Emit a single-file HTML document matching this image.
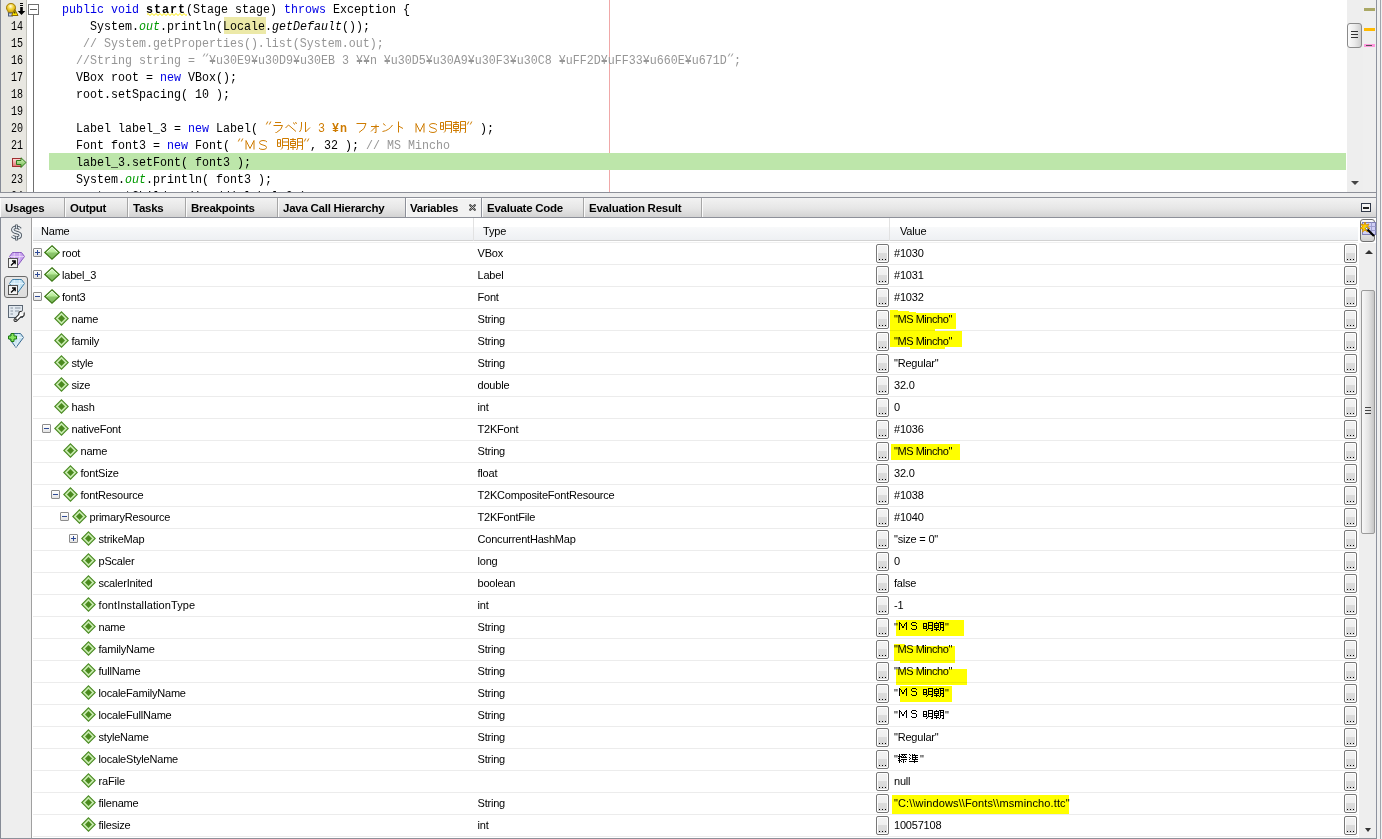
<!DOCTYPE html><html><head><meta charset="utf-8"><style>
*{margin:0;padding:0;box-sizing:border-box}
html,body{width:1382px;height:839px;overflow:hidden;background:#fff;font-family:"Liberation Sans",sans-serif}
.a{position:absolute}
svg.a{overflow:visible}
.ln{position:absolute;font-family:"Liberation Mono",monospace;font-size:11.667px;color:#000;line-height:17px;height:17px;white-space:pre;transform:scale(0.86,1.12);transform-origin:0 12px;margin-top:2px}
.cr{position:absolute;font-family:"Liberation Mono",monospace;font-size:11.667px;white-space:pre;color:#000;line-height:17px;height:17px;transform:scaleY(1.12);transform-origin:0 12px;margin-top:2px}
.tab{position:absolute;top:198px;height:19px;font-weight:bold;font-size:11.5px;color:#000;line-height:19px;border-right:1px solid #a6a6a6;border-left:1px solid #fbfbfb;background:linear-gradient(#f2f2f2,#e6e6e6 55%,#d3d3d3)}
.tab span{position:absolute;left:4px;top:1px;letter-spacing:-0.25px;white-space:nowrap}
.hc{position:absolute;top:224px;font-size:11px;line-height:14px;color:#000;letter-spacing:-0.2px}
.sep{position:absolute;left:33px;width:1325px;height:1px;background:#ececec}
.t{position:absolute;font-size:11px;line-height:14px;color:#000;white-space:pre;letter-spacing:-0.2px}
.btn{position:absolute;width:13px;height:19px;border:1px solid #777;border-radius:2px;box-shadow:inset 0 0 0 1px #fff;background:linear-gradient(#f3f3f3,#efefef 45%,#dcdcdc 50%,#d8d8d8)}
.btn i{position:absolute;top:14px;width:1px;height:1px;background:#000}
.hl{position:absolute;background:#ffff00;mix-blend-mode:multiply}
</style></head><body>
<div class="a" style="left:0;top:0;width:1px;height:192px;background:#868b96"></div>
<div class="a" style="left:1px;top:0;width:25px;height:192px;background:#e8e7e1"></div>
<div class="a" style="left:26px;top:0;width:1px;height:192px;background:#c2c2ba"></div>
<div class="a" style="left:28px;top:4px;width:11px;height:11px;border:1px solid #707070;background:#fff"></div>
<div class="a" style="left:30px;top:9px;width:7px;height:1px;background:#606060"></div>
<div class="a" style="left:33px;top:15px;width:1px;height:177px;background:#707070"></div>
<div class="a" style="left:609px;top:0;width:1px;height:192px;background:#f0a8a8"></div>
<div class="a" style="left:224px;top:17px;width:42px;height:17px;background:#ece9a8"></div>
<div class="a" style="left:49px;top:153px;width:1297px;height:17px;background:#bde6aa"></div>
<svg class="a" style="left:4px;top:2px" width="23" height="15" viewBox="0 0 23 15">
<defs><radialGradient id="bulb" cx="0.45" cy="0.3" r="0.7"><stop offset="0" stop-color="#fffbe0"/><stop offset="0.45" stop-color="#f3d33a"/><stop offset="1" stop-color="#c79a00"/></radialGradient></defs>
<path d="M7 1.5C4 1.5 2.5 3.5 2.5 5.8C2.5 8 4.2 9 4.5 11H9.5C9.8 9 11.5 8 11.5 5.8C11.5 3.5 10 1.5 7 1.5Z" fill="url(#bulb)" stroke="#a27a00" stroke-width="1"/>
<rect x="4.5" y="11" width="4" height="3" fill="#c8d0e0" stroke="#4a5a78" stroke-width="1"/>
<path d="M10.8 7.5L14 13.5H7.6Z" fill="#ffe600" stroke="#8a6a00" stroke-width="1"/>
<path d="M10.8 9.5V11.5" stroke="#000" stroke-width="1"/>
<path d="M16 1.5H19 M16 3.5H19" stroke="#000" stroke-width="1.2"/>
<path d="M16.2 5H18.8V9H21.3L17.5 13L13.7 9H16.2Z" fill="#000"/>
</svg>
<svg class="a" style="left:11px;top:157px" width="16" height="12" viewBox="0 0 16 12">
<defs><linearGradient id="rb" x1="0" y1="0" x2="0" y2="1"><stop offset="0" stop-color="#ffe0e0"/><stop offset="1" stop-color="#e07070"/></linearGradient>
<linearGradient id="ga" x1="0" y1="0" x2="0" y2="1"><stop offset="0" stop-color="#d8f5c0"/><stop offset="1" stop-color="#6cb84a"/></linearGradient></defs>
<rect x="1.5" y="1.5" width="9" height="8" fill="url(#rb)" stroke="#a03030" stroke-width="1"/>
<path d="M5.5 3.5H10V0.8L15 5.5L10 10.5V7.5H5.5Z" fill="url(#ga)" stroke="#2f7a1a" stroke-width="1"/>
</svg>
<div class="ln" style="left:10.5px;top:17px">14</div>
<div class="ln" style="left:10.5px;top:34px">15</div>
<div class="ln" style="left:10.5px;top:51px">16</div>
<div class="ln" style="left:10.5px;top:68px">17</div>
<div class="ln" style="left:10.5px;top:85px">18</div>
<div class="ln" style="left:10.5px;top:102px">19</div>
<div class="ln" style="left:10.5px;top:119px">20</div>
<div class="ln" style="left:10.5px;top:136px">21</div>
<div class="ln" style="left:10.5px;top:170px">23</div>
<div class="ln" style="left:10.5px;top:187px">24</div>
<div class="cr" style="left:62px;top:0px;color:#0000e6;">public</div>
<div class="cr" style="left:104px;top:0px;color:#000;"> </div>
<div class="cr" style="left:111px;top:0px;color:#0000e6;">void</div>
<div class="cr" style="left:139px;top:0px;color:#000;"> </div>
<div class="cr" style="left:146px;top:0px;color:#000;font-weight:bold;letter-spacing:1px">start</div>
<div class="cr" style="left:186px;top:0px;color:#000;">(Stage stage) </div>
<div class="cr" style="left:284px;top:0px;color:#0000e6;">throws</div>
<div class="cr" style="left:326px;top:0px;color:#000;"> Exception {</div>
<div class="cr" style="left:90px;top:17px;color:#000;">System.</div>
<div class="cr" style="left:139px;top:17px;color:#009900;font-style:italic">out</div>
<div class="cr" style="left:160px;top:17px;color:#000;">.println(</div>
<div class="cr" style="left:223px;top:17px;color:#000;">Locale</div>
<div class="cr" style="left:265px;top:17px;color:#000;">.</div>
<div class="cr" style="left:272px;top:17px;color:#000;font-style:italic">getDefault</div>
<div class="cr" style="left:342px;top:17px;color:#000;">());</div>
<div class="cr" style="left:83px;top:34px;color:#969696;">// System.getProperties().list(System.out);</div>
<div class="cr" style="left:76px;top:51px;color:#969696;">//String string = </div>
<svg class="a" style="left:202px;top:53px" width="7" height="5" viewBox="0 0 7 5"><path d="M2.8 0.5L1.3 3.5 M5.8 0.5L4.3 3.5" stroke="#969696" stroke-width="1" fill="none"/></svg>
<div class="cr" style="left:209px;top:51px;color:#969696;">¥u30E9¥u30D9¥u30EB 3 ¥¥n ¥u30D5¥u30A9¥u30F3¥u30C8 ¥uFF2D¥uFF33¥u660E¥u671D</div>
<svg class="a" style="left:727px;top:53px" width="7" height="5" viewBox="0 0 7 5"><path d="M2.8 0.5L1.3 3.5 M5.8 0.5L4.3 3.5" stroke="#969696" stroke-width="1" fill="none"/></svg>
<div class="cr" style="left:734px;top:51px;color:#969696;">;</div>
<div class="cr" style="left:76px;top:68px;color:#000;">VBox root = </div>
<div class="cr" style="left:160px;top:68px;color:#0000e6;">new</div>
<div class="cr" style="left:181px;top:68px;color:#000;"> VBox();</div>
<div class="cr" style="left:76px;top:85px;color:#000;">root.setSpacing( 10 );</div>
<div class="cr" style="left:76px;top:119px;color:#000;">Label label_3 = </div>
<div class="cr" style="left:188px;top:119px;color:#0000e6;">new</div>
<div class="cr" style="left:209px;top:119px;color:#000;"> Label( </div>
<svg class="a" style="left:265px;top:121px" width="7" height="5" viewBox="0 0 7 5"><path d="M2.8 0.5L1.3 3.5 M5.8 0.5L4.3 3.5" stroke="#ce7b00" stroke-width="1" fill="none"/></svg>
<svg class="a" style="left:272px;top:121px" width="13" height="12" viewBox="0 0 13 12"><path d="M3 1.5H9 M1.5 4.5H10.5Q10 8.5 4.5 11.5H3.5" fill="none" stroke="#ce7b00" stroke-width="1"/></svg>
<svg class="a" style="left:285px;top:121px" width="13" height="12" viewBox="0 0 13 12"><path d="M0.5 7 L3.5 4 L11 10.5 M8.5 1.5L9.5 3.5 M10.5 1L11.5 3" fill="none" stroke="#ce7b00" stroke-width="1"/></svg>
<svg class="a" style="left:298px;top:121px" width="13" height="12" viewBox="0 0 13 12"><path d="M3.5 1V5Q3.5 9 1.5 11 M7.5 1V11 L12 6.5" fill="none" stroke="#ce7b00" stroke-width="1"/></svg>
<div class="cr" style="left:311px;top:119px;color:#ce7b00;"> 3 </div>
<div class="cr" style="left:332px;top:119px;color:#ce7b00;font-weight:bold;letter-spacing:1px">¥n</div>
<div class="cr" style="left:348px;top:119px;color:#ce7b00;"> </div>
<svg class="a" style="left:355px;top:121px" width="13" height="12" viewBox="0 0 13 12"><path d="M1.5 2.5H11Q10.5 8 4 11.5" fill="none" stroke="#ce7b00" stroke-width="1"/></svg>
<svg class="a" style="left:368px;top:121px" width="13" height="12" viewBox="0 0 13 12"><path d="M3 5.5H11 M8 3.5V11.5H6.5 M7.5 6L3 10.5" fill="none" stroke="#ce7b00" stroke-width="1"/></svg>
<svg class="a" style="left:381px;top:121px" width="13" height="12" viewBox="0 0 13 12"><path d="M2 2.5L4.5 4.5 M1.5 10.5Q8 9.5 11.5 4" fill="none" stroke="#ce7b00" stroke-width="1"/></svg>
<svg class="a" style="left:394px;top:121px" width="13" height="12" viewBox="0 0 13 12"><path d="M4.5 0.5V11.5 M4.5 5L9 7.5" fill="none" stroke="#ce7b00" stroke-width="1"/></svg>
<div class="cr" style="left:407px;top:119px;color:#ce7b00;"> </div>
<svg class="a" style="left:414px;top:122px" width="13" height="12" viewBox="0 0 13 12"><path d="M2 10.5V1.5L6 9.5L10 1.5V10.5" fill="none" stroke="#ce7b00" stroke-width="1"/></svg>
<svg class="a" style="left:427px;top:122px" width="13" height="12" viewBox="0 0 13 12"><path d="M10 3Q9 1.5 6 1.5Q2.5 1.5 2.5 3.5Q2.5 5.5 6 6Q9.5 6.5 9.5 8.5Q9.5 10.5 6 10.5Q3 10.5 2 9" fill="none" stroke="#ce7b00" stroke-width="1"/></svg>
<svg class="a" style="left:440px;top:121px" width="13" height="12" viewBox="0 0 13 12"><path d="M0.5 1.5H3.5V8.5H0.5Z M0.5 5H3.5 M5.5 0.5H11.5V11.5H10.5 M5.5 0.5V8.5Q5.5 10.5 4 11.5 M5.5 4H11.5 M5.5 7.5H11.5" fill="none" stroke="#ce7b00" stroke-width="1"/></svg>
<svg class="a" style="left:453px;top:121px" width="13" height="12" viewBox="0 0 13 12"><path d="M0 1.5H6 M3 0V3.5 M0.5 3.5H5.5V7.5H0.5Z M0.5 5.5H5.5 M0 9.5H6 M3 7.5V12 M7.5 0.5H12.5V11.5H11.5 M7.5 0.5V9Q7.5 11 6.5 12 M7.5 4H12.5 M7.5 7.5H12.5" fill="none" stroke="#ce7b00" stroke-width="1"/></svg>
<svg class="a" style="left:466px;top:121px" width="7" height="5" viewBox="0 0 7 5"><path d="M2.8 0.5L1.3 3.5 M5.8 0.5L4.3 3.5" stroke="#ce7b00" stroke-width="1" fill="none"/></svg>
<div class="cr" style="left:473px;top:119px;color:#000;"> );</div>
<div class="cr" style="left:76px;top:136px;color:#000;">Font font3 = </div>
<div class="cr" style="left:167px;top:136px;color:#0000e6;">new</div>
<div class="cr" style="left:188px;top:136px;color:#000;"> Font( </div>
<svg class="a" style="left:237px;top:138px" width="7" height="5" viewBox="0 0 7 5"><path d="M2.8 0.5L1.3 3.5 M5.8 0.5L4.3 3.5" stroke="#ce7b00" stroke-width="1" fill="none"/></svg>
<svg class="a" style="left:244px;top:139px" width="13" height="12" viewBox="0 0 13 12"><path d="M2 10.5V1.5L6 9.5L10 1.5V10.5" fill="none" stroke="#ce7b00" stroke-width="1"/></svg>
<svg class="a" style="left:257px;top:139px" width="13" height="12" viewBox="0 0 13 12"><path d="M10 3Q9 1.5 6 1.5Q2.5 1.5 2.5 3.5Q2.5 5.5 6 6Q9.5 6.5 9.5 8.5Q9.5 10.5 6 10.5Q3 10.5 2 9" fill="none" stroke="#ce7b00" stroke-width="1"/></svg>
<div class="cr" style="left:270px;top:136px;color:#ce7b00;"> </div>
<svg class="a" style="left:277px;top:138px" width="13" height="12" viewBox="0 0 13 12"><path d="M0.5 1.5H3.5V8.5H0.5Z M0.5 5H3.5 M5.5 0.5H11.5V11.5H10.5 M5.5 0.5V8.5Q5.5 10.5 4 11.5 M5.5 4H11.5 M5.5 7.5H11.5" fill="none" stroke="#ce7b00" stroke-width="1"/></svg>
<svg class="a" style="left:290px;top:138px" width="13" height="12" viewBox="0 0 13 12"><path d="M0 1.5H6 M3 0V3.5 M0.5 3.5H5.5V7.5H0.5Z M0.5 5.5H5.5 M0 9.5H6 M3 7.5V12 M7.5 0.5H12.5V11.5H11.5 M7.5 0.5V9Q7.5 11 6.5 12 M7.5 4H12.5 M7.5 7.5H12.5" fill="none" stroke="#ce7b00" stroke-width="1"/></svg>
<svg class="a" style="left:303px;top:138px" width="7" height="5" viewBox="0 0 7 5"><path d="M2.8 0.5L1.3 3.5 M5.8 0.5L4.3 3.5" stroke="#ce7b00" stroke-width="1" fill="none"/></svg>
<div class="cr" style="left:310px;top:136px;color:#000;">, 32 ); </div>
<div class="cr" style="left:366px;top:136px;color:#969696;">// MS Mincho</div>
<div class="cr" style="left:76px;top:153px;color:#000;">label_3.setFont( font3 );</div>
<div class="cr" style="left:76px;top:170px;color:#000;">System.</div>
<div class="cr" style="left:125px;top:170px;color:#009900;font-style:italic">out</div>
<div class="cr" style="left:146px;top:170px;color:#000;">.println( font3 );</div>
<div class="cr" style="left:76px;top:187px;color:#000;">root.getChildren().add( label_3 );</div>
<svg class="a" style="left:147px;top:12px" width="40" height="4" viewBox="0 0 40 4"><path d="M0 1.5h2v1h-2z M2 2.5h2v1h-2z M4 1.5h2v1h-2z M6 2.5h2v1h-2z M8 1.5h2v1h-2z M10 2.5h2v1h-2z M12 1.5h2v1h-2z M14 2.5h2v1h-2z M16 1.5h2v1h-2z M18 2.5h2v1h-2z M20 1.5h2v1h-2z M22 2.5h2v1h-2z M24 1.5h2v1h-2z M26 2.5h2v1h-2z M28 1.5h2v1h-2z M30 2.5h2v1h-2z M32 1.5h2v1h-2z M34 2.5h2v1h-2z M36 1.5h2v1h-2z M38 2.5h2v1h-2z " fill="#ffee00"/></svg>
<div class="a" style="left:1347px;top:0;width:16px;height:192px;background:#eeeeee"></div>
<div class="a" style="left:1347px;top:23px;width:15px;height:25px;border:1px solid #8a8a8a;border-radius:3px;background:linear-gradient(90deg,#fbfbfb,#ebebeb 50%,#cfcfcf)"></div>
<div class="a" style="left:1351px;top:31px;width:7px;height:1px;background:#333"></div>
<div class="a" style="left:1351px;top:34px;width:7px;height:1px;background:#333"></div>
<div class="a" style="left:1351px;top:37px;width:7px;height:1px;background:#333"></div>
<div class="a" style="left:1351px;top:181px;width:0;height:0;border-left:4px solid transparent;border-right:4px solid transparent;border-top:4px solid #444"></div>
<div class="a" style="left:1363px;top:0;width:13px;height:192px;background:#efefef"></div>
<div class="a" style="left:1364px;top:8px;width:11px;height:3px;background:#aaa866"></div>
<div class="a" style="left:1364px;top:28px;width:11px;height:3px;background:#ffba00"></div>
<div class="a" style="left:1364px;top:44px;width:11px;height:3px;background:#ff99dd"></div>
<div class="a" style="left:1366px;top:45px;width:6px;height:1px;background:#555"></div>
<div class="a" style="left:1376px;top:0;width:1px;height:839px;background:#8d929e"></div>
<div class="a" style="left:1377px;top:0;width:5px;height:839px;background:#f0f0f0"></div>
<div class="a" style="left:1380px;top:0;width:1px;height:839px;background:#a0a4ac"></div>
<div class="a" style="left:0;top:192px;width:1377px;height:1px;background:#8d9099"></div>
<div class="a" style="left:0;top:193px;width:1376px;height:4px;background:#eeeeee"></div>
<div class="a" style="left:0;top:197px;width:1376px;height:21px;background:linear-gradient(#f2f2f2,#e6e6e6 55%,#d3d3d3);border-top:1px solid #8d9099;border-bottom:1px solid #8d9099"></div>
<div class="tab" style="left:0px;width:65px"><span>Usages</span></div>
<div class="tab" style="left:65px;width:63px"><span>Output</span></div>
<div class="tab" style="left:128px;width:58px"><span>Tasks</span></div>
<div class="tab" style="left:186px;width:92px"><span>Breakpoints</span></div>
<div class="tab" style="left:278px;width:128px"><span>Java Call Hierarchy</span></div>
<div class="tab" style="left:405px;width:77px;background:#f2f2f2;border-left:1px solid #8d9099;border-right:1px solid #8d9099;box-shadow:inset 1px 1px 0 #fff"><span>Variables</span></div>
<svg class="a" style="left:469px;top:204px" width="7" height="7" viewBox="0 0 7 7"><path d="M1.2 1.2L5.8 5.8M5.8 1.2L1.2 5.8" stroke="#3a3a3a" stroke-width="2.2" stroke-linecap="round"/><path d="M1.5 1.5L5.5 5.5M5.5 1.5L1.5 5.5" stroke="#e8e8e8" stroke-width="0.7"/></svg>
<div class="tab" style="left:482px;width:102px"><span>Evaluate Code</span></div>
<div class="tab" style="left:584px;width:118px"><span>Evaluation Result</span></div>
<div class="tab" style="left:702px;width:674px;border-right:none"></div>
<div class="a" style="left:1361px;top:203px;width:10px;height:9px;border:1px solid #303848;background:#f4f4f4"></div>
<div class="a" style="left:1363px;top:207px;width:6px;height:2px;background:#202020"></div>
<div class="a" style="left:0;top:218px;width:1px;height:621px;background:#868b96"></div>
<div class="a" style="left:1px;top:218px;width:30px;height:621px;background:#eeeeee"></div>
<div class="a" style="left:31px;top:218px;width:1px;height:621px;background:#a0a0a0"></div>
<svg class="a" style="left:10px;top:224px" width="13" height="17" viewBox="0 0 13 17"><path d="M10.3 5C9.5 3.8 8.2 3.2 6.5 3.2C4.3 3.2 2.8 4.2 2.8 5.8C2.8 7.6 4.6 8.1 6.5 8.5C8.4 8.9 10.3 9.5 10.3 11.2C10.3 12.8 8.7 13.8 6.5 13.8C4.6 13.8 3.2 13.2 2.3 12" fill="none" stroke="#4b5560" stroke-width="3.4"/><path d="M10.3 5C9.5 3.8 8.2 3.2 6.5 3.2C4.3 3.2 2.8 4.2 2.8 5.8C2.8 7.6 4.6 8.1 6.5 8.5C8.4 8.9 10.3 9.5 10.3 11.2C10.3 12.8 8.7 13.8 6.5 13.8C4.6 13.8 3.2 13.2 2.3 12" fill="none" stroke="#e8eef3" stroke-width="1.6"/><path d="M6.5 0.5V4.5 M6.5 12.5V16.5" stroke="#4b5560" stroke-width="2.6"/><path d="M6.5 1.2V4.5 M6.5 12.5V15.8" stroke="#e8eef3" stroke-width="0.9"/></svg>
<svg class="a" style="left:9px;top:252px" width="16" height="15" viewBox="0 0 16 15"><path d="M3.5 0.5H12.5L15.5 4.5L8 14.5L0.5 4.5Z" fill="#c9a2f0" stroke="#8a5cc0" stroke-width="1"/><path d="M0.8 4.5H15.2 M5 4.5L8 14 L11 4.5 M5.5 0.8L5 4.5 M10.5 0.8L11 4.5" fill="none" stroke="#fff" stroke-width="0.6" opacity="0.8"/></svg>
<svg class="a" style="left:8px;top:258px" width="10" height="10" viewBox="0 0 10 10"><rect x="0.5" y="0.5" width="9" height="9" fill="#f4f4f4" stroke="#555" stroke-width="1"/><path d="M3 7.5L7 3.5 M4 3H7.2V6.2" fill="none" stroke="#000" stroke-width="1.3"/></svg>
<div class="a" style="left:4px;top:276px;width:24px;height:22px;border:1px solid #6a6a6a;border-radius:3px;background:linear-gradient(#e6e6e6,#dcdcdc)"></div>
<svg class="a" style="left:9px;top:279px" width="16" height="15" viewBox="0 0 16 15"><path d="M3.5 0.5H12.5L15.5 4.5L8 14.5L0.5 4.5Z" fill="#c6e4f4" stroke="#3f7fa8" stroke-width="1"/><path d="M0.8 4.5H15.2 M5 4.5L8 14 L11 4.5 M5.5 0.8L5 4.5 M10.5 0.8L11 4.5" fill="none" stroke="#fff" stroke-width="0.6" opacity="0.8"/></svg>
<svg class="a" style="left:8px;top:285px" width="10" height="10" viewBox="0 0 10 10"><rect x="0.5" y="0.5" width="9" height="9" fill="#f4f4f4" stroke="#555" stroke-width="1"/><path d="M3 7.5L7 3.5 M4 3H7.2V6.2" fill="none" stroke="#000" stroke-width="1.3"/></svg>
<svg class="a" style="left:8px;top:305px" width="17" height="17" viewBox="0 0 17 17"><rect x="0.5" y="0.5" width="14" height="12" fill="#e2e9f0" stroke="#5b6673" stroke-width="1"/><path d="M2.5 3H5 M7 3H12.5 M2.5 6H5 M7 6H11 M2.5 9H5" stroke="#8a96a4" stroke-width="1"/><path d="M7.5 15L13 9.5" stroke="#2e2e2e" stroke-width="4" stroke-linecap="round"/><circle cx="13.5" cy="9" r="3.3" fill="#2e2e2e"/><path d="M7.5 15L13 9.5" stroke="#ffffff" stroke-width="2" stroke-linecap="round"/><circle cx="13.5" cy="9" r="2.2" fill="#fff"/><path d="M13.2 8.8L16 6" stroke="#eeeeee" stroke-width="2"/><circle cx="8" cy="14.5" r="1" fill="#333"/></svg>
<svg class="a" style="left:8px;top:333px" width="16" height="15" viewBox="0 0 16 15"><path d="M3.5 0.5H12.5L15.5 4.5L8 14.5L0.5 4.5Z" fill="#c8e4f2" stroke="#3a6890" stroke-width="1"/><path d="M0.8 4.5H15.2 M5 4.5L8 14 L11 4.5 M5.5 0.8L5 4.5 M10.5 0.8L11 4.5" fill="none" stroke="#fff" stroke-width="0.6" opacity="0.8"/></svg>
<svg class="a" style="left:8px;top:333px" width="9" height="9" viewBox="0 0 9 9"><path d="M3 0.5H6V3H8.5V6H6V8.5H3V6H0.5V3H3Z" fill="#86e460" stroke="#1f7a10" stroke-width="1"/></svg>
<div class="a" style="left:33px;top:227px;width:1325px;height:13px;background:linear-gradient(#f8f9fa,#eef0f3)"></div>
<div class="a" style="left:33px;top:240px;width:1325px;height:1px;background:#d2d2d2"></div>
<div class="a" style="left:33px;top:242px;width:1325px;height:1px;background:#f0f0f0"></div>
<div class="a" style="left:473px;top:218px;width:1px;height:23px;background:#e2e2e2"></div>
<div class="a" style="left:889px;top:218px;width:1px;height:23px;background:#e2e2e2"></div>
<div class="hc" style="left:41px">Name</div>
<div class="hc" style="left:483px">Type</div>
<div class="hc" style="left:900px">Value</div>
<div class="sep" style="top:264px"></div>
<div class="a" style="left:33px;top:248px;width:9px;height:9px;border:1px solid #8c8c8c;border-radius:1px;background:linear-gradient(#ffffff,#f2f2f2 50%,#e4e4e4)"></div>
<div class="a" style="left:35px;top:252px;width:5px;height:1px;background:#2f4b96"></div>
<div class="a" style="left:37px;top:250px;width:1px;height:5px;background:#2f4b96"></div>
<svg class="a" style="left:44px;top:245px" width="16" height="15" viewBox="0 0 16 15"><defs><linearGradient id="dg0" x1="0" y1="0" x2="0" y2="1"><stop offset="0" stop-color="#dcfacc"/><stop offset="0.47" stop-color="#b4ea94"/><stop offset="0.53" stop-color="#8cc66c"/><stop offset="1" stop-color="#7cb85c"/></linearGradient></defs><path d="M8 0.8L15.2 7.5L8 14.2L0.8 7.5Z" fill="url(#dg0)" stroke="#3d7a16" stroke-width="1.25"/><path d="M2.6 7.3L8 2.3L13.4 7.3" fill="none" stroke="#f4fff0" stroke-width="0.8" opacity="0.9"/></svg>
<div class="t" style="left:62px;top:246px">root</div>
<div class="t" style="left:477.5px;top:246px">VBox</div>
<div class="btn" style="left:876px;top:244px"><i style="left:2px"></i><i style="left:5px"></i><i style="left:8px"></i></div>
<div class="btn" style="left:1344px;top:244px"><i style="left:2px"></i><i style="left:5px"></i><i style="left:8px"></i></div>
<div class="t" style="left:894px;top:246px">#1030</div>
<div class="sep" style="top:286px"></div>
<div class="a" style="left:33px;top:270px;width:9px;height:9px;border:1px solid #8c8c8c;border-radius:1px;background:linear-gradient(#ffffff,#f2f2f2 50%,#e4e4e4)"></div>
<div class="a" style="left:35px;top:274px;width:5px;height:1px;background:#2f4b96"></div>
<div class="a" style="left:37px;top:272px;width:1px;height:5px;background:#2f4b96"></div>
<svg class="a" style="left:44px;top:267px" width="16" height="15" viewBox="0 0 16 15"><defs><linearGradient id="dg1" x1="0" y1="0" x2="0" y2="1"><stop offset="0" stop-color="#dcfacc"/><stop offset="0.47" stop-color="#b4ea94"/><stop offset="0.53" stop-color="#8cc66c"/><stop offset="1" stop-color="#7cb85c"/></linearGradient></defs><path d="M8 0.8L15.2 7.5L8 14.2L0.8 7.5Z" fill="url(#dg1)" stroke="#3d7a16" stroke-width="1.25"/><path d="M2.6 7.3L8 2.3L13.4 7.3" fill="none" stroke="#f4fff0" stroke-width="0.8" opacity="0.9"/></svg>
<div class="t" style="left:62px;top:268px">label_3</div>
<div class="t" style="left:477.5px;top:268px">Label</div>
<div class="btn" style="left:876px;top:266px"><i style="left:2px"></i><i style="left:5px"></i><i style="left:8px"></i></div>
<div class="btn" style="left:1344px;top:266px"><i style="left:2px"></i><i style="left:5px"></i><i style="left:8px"></i></div>
<div class="t" style="left:894px;top:268px">#1031</div>
<div class="sep" style="top:308px"></div>
<div class="a" style="left:33px;top:292px;width:9px;height:9px;border:1px solid #8c8c8c;border-radius:1px;background:linear-gradient(#ffffff,#f2f2f2 50%,#e4e4e4)"></div>
<div class="a" style="left:35px;top:296px;width:5px;height:1px;background:#2f4b96"></div>
<svg class="a" style="left:44px;top:289px" width="16" height="15" viewBox="0 0 16 15"><defs><linearGradient id="dg2" x1="0" y1="0" x2="0" y2="1"><stop offset="0" stop-color="#dcfacc"/><stop offset="0.47" stop-color="#b4ea94"/><stop offset="0.53" stop-color="#8cc66c"/><stop offset="1" stop-color="#7cb85c"/></linearGradient></defs><path d="M8 0.8L15.2 7.5L8 14.2L0.8 7.5Z" fill="url(#dg2)" stroke="#3d7a16" stroke-width="1.25"/><path d="M2.6 7.3L8 2.3L13.4 7.3" fill="none" stroke="#f4fff0" stroke-width="0.8" opacity="0.9"/></svg>
<div class="t" style="left:62px;top:290px">font3</div>
<div class="t" style="left:477.5px;top:290px">Font</div>
<div class="btn" style="left:876px;top:288px"><i style="left:2px"></i><i style="left:5px"></i><i style="left:8px"></i></div>
<div class="btn" style="left:1344px;top:288px"><i style="left:2px"></i><i style="left:5px"></i><i style="left:8px"></i></div>
<div class="t" style="left:894px;top:290px">#1032</div>
<div class="sep" style="top:330px"></div>
<svg class="a" style="left:54px;top:311px" width="15" height="15" viewBox="0 0 15 15"><path d="M7.5 0.8L14.2 7.5L7.5 14.2L0.8 7.5Z" fill="#c8ebb0" stroke="#4a8a22" stroke-width="1.1"/><path d="M7.5 4L11 7.5L7.5 11L4 7.5Z" fill="#4a8a1e"/></svg>
<div class="t" style="left:71.5px;top:312px">name</div>
<div class="t" style="left:477.5px;top:312px">String</div>
<div class="btn" style="left:876px;top:310px"><i style="left:2px"></i><i style="left:5px"></i><i style="left:8px"></i></div>
<div class="btn" style="left:1344px;top:310px"><i style="left:2px"></i><i style="left:5px"></i><i style="left:8px"></i></div>
<div class="t" style="left:894px;top:312px;letter-spacing:-0.45px">"MS Mincho"</div>
<div class="sep" style="top:352px"></div>
<svg class="a" style="left:54px;top:333px" width="15" height="15" viewBox="0 0 15 15"><path d="M7.5 0.8L14.2 7.5L7.5 14.2L0.8 7.5Z" fill="#c8ebb0" stroke="#4a8a22" stroke-width="1.1"/><path d="M7.5 4L11 7.5L7.5 11L4 7.5Z" fill="#4a8a1e"/></svg>
<div class="t" style="left:71.5px;top:334px">family</div>
<div class="t" style="left:477.5px;top:334px">String</div>
<div class="btn" style="left:876px;top:332px"><i style="left:2px"></i><i style="left:5px"></i><i style="left:8px"></i></div>
<div class="btn" style="left:1344px;top:332px"><i style="left:2px"></i><i style="left:5px"></i><i style="left:8px"></i></div>
<div class="t" style="left:894px;top:334px;letter-spacing:-0.45px">"MS Mincho"</div>
<div class="sep" style="top:374px"></div>
<svg class="a" style="left:54px;top:355px" width="15" height="15" viewBox="0 0 15 15"><path d="M7.5 0.8L14.2 7.5L7.5 14.2L0.8 7.5Z" fill="#c8ebb0" stroke="#4a8a22" stroke-width="1.1"/><path d="M7.5 4L11 7.5L7.5 11L4 7.5Z" fill="#4a8a1e"/></svg>
<div class="t" style="left:71.5px;top:356px">style</div>
<div class="t" style="left:477.5px;top:356px">String</div>
<div class="btn" style="left:876px;top:354px"><i style="left:2px"></i><i style="left:5px"></i><i style="left:8px"></i></div>
<div class="btn" style="left:1344px;top:354px"><i style="left:2px"></i><i style="left:5px"></i><i style="left:8px"></i></div>
<div class="t" style="left:894px;top:356px">"Regular"</div>
<div class="sep" style="top:396px"></div>
<svg class="a" style="left:54px;top:377px" width="15" height="15" viewBox="0 0 15 15"><path d="M7.5 0.8L14.2 7.5L7.5 14.2L0.8 7.5Z" fill="#c8ebb0" stroke="#4a8a22" stroke-width="1.1"/><path d="M7.5 4L11 7.5L7.5 11L4 7.5Z" fill="#4a8a1e"/></svg>
<div class="t" style="left:71.5px;top:378px">size</div>
<div class="t" style="left:477.5px;top:378px">double</div>
<div class="btn" style="left:876px;top:376px"><i style="left:2px"></i><i style="left:5px"></i><i style="left:8px"></i></div>
<div class="btn" style="left:1344px;top:376px"><i style="left:2px"></i><i style="left:5px"></i><i style="left:8px"></i></div>
<div class="t" style="left:894px;top:378px">32.0</div>
<div class="sep" style="top:418px"></div>
<svg class="a" style="left:54px;top:399px" width="15" height="15" viewBox="0 0 15 15"><path d="M7.5 0.8L14.2 7.5L7.5 14.2L0.8 7.5Z" fill="#c8ebb0" stroke="#4a8a22" stroke-width="1.1"/><path d="M7.5 4L11 7.5L7.5 11L4 7.5Z" fill="#4a8a1e"/></svg>
<div class="t" style="left:71.5px;top:400px">hash</div>
<div class="t" style="left:477.5px;top:400px">int</div>
<div class="btn" style="left:876px;top:398px"><i style="left:2px"></i><i style="left:5px"></i><i style="left:8px"></i></div>
<div class="btn" style="left:1344px;top:398px"><i style="left:2px"></i><i style="left:5px"></i><i style="left:8px"></i></div>
<div class="t" style="left:894px;top:400px">0</div>
<div class="sep" style="top:440px"></div>
<div class="a" style="left:42px;top:424px;width:9px;height:9px;border:1px solid #8c8c8c;border-radius:1px;background:linear-gradient(#ffffff,#f2f2f2 50%,#e4e4e4)"></div>
<div class="a" style="left:44px;top:428px;width:5px;height:1px;background:#2f4b96"></div>
<svg class="a" style="left:54px;top:421px" width="15" height="15" viewBox="0 0 15 15"><path d="M7.5 0.8L14.2 7.5L7.5 14.2L0.8 7.5Z" fill="#c8ebb0" stroke="#4a8a22" stroke-width="1.1"/><path d="M7.5 4L11 7.5L7.5 11L4 7.5Z" fill="#4a8a1e"/></svg>
<div class="t" style="left:71.5px;top:422px">nativeFont</div>
<div class="t" style="left:477.5px;top:422px">T2KFont</div>
<div class="btn" style="left:876px;top:420px"><i style="left:2px"></i><i style="left:5px"></i><i style="left:8px"></i></div>
<div class="btn" style="left:1344px;top:420px"><i style="left:2px"></i><i style="left:5px"></i><i style="left:8px"></i></div>
<div class="t" style="left:894px;top:422px">#1036</div>
<div class="sep" style="top:462px"></div>
<svg class="a" style="left:63px;top:443px" width="15" height="15" viewBox="0 0 15 15"><path d="M7.5 0.8L14.2 7.5L7.5 14.2L0.8 7.5Z" fill="#c8ebb0" stroke="#4a8a22" stroke-width="1.1"/><path d="M7.5 4L11 7.5L7.5 11L4 7.5Z" fill="#4a8a1e"/></svg>
<div class="t" style="left:80.5px;top:444px">name</div>
<div class="t" style="left:477.5px;top:444px">String</div>
<div class="btn" style="left:876px;top:442px"><i style="left:2px"></i><i style="left:5px"></i><i style="left:8px"></i></div>
<div class="btn" style="left:1344px;top:442px"><i style="left:2px"></i><i style="left:5px"></i><i style="left:8px"></i></div>
<div class="t" style="left:894px;top:444px;letter-spacing:-0.45px">"MS Mincho"</div>
<div class="sep" style="top:484px"></div>
<svg class="a" style="left:63px;top:465px" width="15" height="15" viewBox="0 0 15 15"><path d="M7.5 0.8L14.2 7.5L7.5 14.2L0.8 7.5Z" fill="#c8ebb0" stroke="#4a8a22" stroke-width="1.1"/><path d="M7.5 4L11 7.5L7.5 11L4 7.5Z" fill="#4a8a1e"/></svg>
<div class="t" style="left:80.5px;top:466px">fontSize</div>
<div class="t" style="left:477.5px;top:466px">float</div>
<div class="btn" style="left:876px;top:464px"><i style="left:2px"></i><i style="left:5px"></i><i style="left:8px"></i></div>
<div class="btn" style="left:1344px;top:464px"><i style="left:2px"></i><i style="left:5px"></i><i style="left:8px"></i></div>
<div class="t" style="left:894px;top:466px">32.0</div>
<div class="sep" style="top:506px"></div>
<div class="a" style="left:51px;top:490px;width:9px;height:9px;border:1px solid #8c8c8c;border-radius:1px;background:linear-gradient(#ffffff,#f2f2f2 50%,#e4e4e4)"></div>
<div class="a" style="left:53px;top:494px;width:5px;height:1px;background:#2f4b96"></div>
<svg class="a" style="left:63px;top:487px" width="15" height="15" viewBox="0 0 15 15"><path d="M7.5 0.8L14.2 7.5L7.5 14.2L0.8 7.5Z" fill="#c8ebb0" stroke="#4a8a22" stroke-width="1.1"/><path d="M7.5 4L11 7.5L7.5 11L4 7.5Z" fill="#4a8a1e"/></svg>
<div class="t" style="left:80.5px;top:488px">fontResource</div>
<div class="t" style="left:477.5px;top:488px">T2KCompositeFontResource</div>
<div class="btn" style="left:876px;top:486px"><i style="left:2px"></i><i style="left:5px"></i><i style="left:8px"></i></div>
<div class="btn" style="left:1344px;top:486px"><i style="left:2px"></i><i style="left:5px"></i><i style="left:8px"></i></div>
<div class="t" style="left:894px;top:488px">#1038</div>
<div class="sep" style="top:528px"></div>
<div class="a" style="left:60px;top:512px;width:9px;height:9px;border:1px solid #8c8c8c;border-radius:1px;background:linear-gradient(#ffffff,#f2f2f2 50%,#e4e4e4)"></div>
<div class="a" style="left:62px;top:516px;width:5px;height:1px;background:#2f4b96"></div>
<svg class="a" style="left:72px;top:509px" width="15" height="15" viewBox="0 0 15 15"><path d="M7.5 0.8L14.2 7.5L7.5 14.2L0.8 7.5Z" fill="#c8ebb0" stroke="#4a8a22" stroke-width="1.1"/><path d="M7.5 4L11 7.5L7.5 11L4 7.5Z" fill="#4a8a1e"/></svg>
<div class="t" style="left:89.5px;top:510px">primaryResource</div>
<div class="t" style="left:477.5px;top:510px">T2KFontFile</div>
<div class="btn" style="left:876px;top:508px"><i style="left:2px"></i><i style="left:5px"></i><i style="left:8px"></i></div>
<div class="btn" style="left:1344px;top:508px"><i style="left:2px"></i><i style="left:5px"></i><i style="left:8px"></i></div>
<div class="t" style="left:894px;top:510px">#1040</div>
<div class="sep" style="top:550px"></div>
<div class="a" style="left:69px;top:534px;width:9px;height:9px;border:1px solid #8c8c8c;border-radius:1px;background:linear-gradient(#ffffff,#f2f2f2 50%,#e4e4e4)"></div>
<div class="a" style="left:71px;top:538px;width:5px;height:1px;background:#2f4b96"></div>
<div class="a" style="left:73px;top:536px;width:1px;height:5px;background:#2f4b96"></div>
<svg class="a" style="left:81px;top:531px" width="15" height="15" viewBox="0 0 15 15"><path d="M7.5 0.8L14.2 7.5L7.5 14.2L0.8 7.5Z" fill="#c8ebb0" stroke="#4a8a22" stroke-width="1.1"/><path d="M7.5 4L11 7.5L7.5 11L4 7.5Z" fill="#4a8a1e"/></svg>
<div class="t" style="left:98.5px;top:532px">strikeMap</div>
<div class="t" style="left:477.5px;top:532px">ConcurrentHashMap</div>
<div class="btn" style="left:876px;top:530px"><i style="left:2px"></i><i style="left:5px"></i><i style="left:8px"></i></div>
<div class="btn" style="left:1344px;top:530px"><i style="left:2px"></i><i style="left:5px"></i><i style="left:8px"></i></div>
<div class="t" style="left:894px;top:532px">"size = 0"</div>
<div class="sep" style="top:572px"></div>
<svg class="a" style="left:81px;top:553px" width="15" height="15" viewBox="0 0 15 15"><path d="M7.5 0.8L14.2 7.5L7.5 14.2L0.8 7.5Z" fill="#c8ebb0" stroke="#4a8a22" stroke-width="1.1"/><path d="M7.5 4L11 7.5L7.5 11L4 7.5Z" fill="#4a8a1e"/></svg>
<div class="t" style="left:98.5px;top:554px">pScaler</div>
<div class="t" style="left:477.5px;top:554px">long</div>
<div class="btn" style="left:876px;top:552px"><i style="left:2px"></i><i style="left:5px"></i><i style="left:8px"></i></div>
<div class="btn" style="left:1344px;top:552px"><i style="left:2px"></i><i style="left:5px"></i><i style="left:8px"></i></div>
<div class="t" style="left:894px;top:554px">0</div>
<div class="sep" style="top:594px"></div>
<svg class="a" style="left:81px;top:575px" width="15" height="15" viewBox="0 0 15 15"><path d="M7.5 0.8L14.2 7.5L7.5 14.2L0.8 7.5Z" fill="#c8ebb0" stroke="#4a8a22" stroke-width="1.1"/><path d="M7.5 4L11 7.5L7.5 11L4 7.5Z" fill="#4a8a1e"/></svg>
<div class="t" style="left:98.5px;top:576px">scalerInited</div>
<div class="t" style="left:477.5px;top:576px">boolean</div>
<div class="btn" style="left:876px;top:574px"><i style="left:2px"></i><i style="left:5px"></i><i style="left:8px"></i></div>
<div class="btn" style="left:1344px;top:574px"><i style="left:2px"></i><i style="left:5px"></i><i style="left:8px"></i></div>
<div class="t" style="left:894px;top:576px">false</div>
<div class="sep" style="top:616px"></div>
<svg class="a" style="left:81px;top:597px" width="15" height="15" viewBox="0 0 15 15"><path d="M7.5 0.8L14.2 7.5L7.5 14.2L0.8 7.5Z" fill="#c8ebb0" stroke="#4a8a22" stroke-width="1.1"/><path d="M7.5 4L11 7.5L7.5 11L4 7.5Z" fill="#4a8a1e"/></svg>
<div class="t" style="left:98.5px;top:598px;letter-spacing:0.1px">fontInstallationType</div>
<div class="t" style="left:477.5px;top:598px">int</div>
<div class="btn" style="left:876px;top:596px"><i style="left:2px"></i><i style="left:5px"></i><i style="left:8px"></i></div>
<div class="btn" style="left:1344px;top:596px"><i style="left:2px"></i><i style="left:5px"></i><i style="left:8px"></i></div>
<div class="t" style="left:894px;top:598px">-1</div>
<div class="sep" style="top:638px"></div>
<svg class="a" style="left:81px;top:619px" width="15" height="15" viewBox="0 0 15 15"><path d="M7.5 0.8L14.2 7.5L7.5 14.2L0.8 7.5Z" fill="#c8ebb0" stroke="#4a8a22" stroke-width="1.1"/><path d="M7.5 4L11 7.5L7.5 11L4 7.5Z" fill="#4a8a1e"/></svg>
<div class="t" style="left:98.5px;top:620px">name</div>
<div class="t" style="left:477.5px;top:620px">String</div>
<div class="btn" style="left:876px;top:618px"><i style="left:2px"></i><i style="left:5px"></i><i style="left:8px"></i></div>
<div class="btn" style="left:1344px;top:618px"><i style="left:2px"></i><i style="left:5px"></i><i style="left:8px"></i></div>
<div class="t" style="left:894px;top:620px">"</div>
<svg class="a" style="left:899px;top:622px" width="8" height="8" viewBox="0 0 8 8" shape-rendering="crispEdges"><path d="M0 0h1v1h-1zM7 0h1v1h-1zM0 1h2v1h-2zM6 1h2v1h-2zM0 2h1v1h-1zM2 2h1v1h-1zM5 2h1v1h-1zM7 2h1v1h-1zM0 3h1v1h-1zM2 3h1v1h-1zM5 3h1v1h-1zM7 3h1v1h-1zM0 4h1v1h-1zM3 4h2v1h-2zM7 4h1v1h-1zM0 5h1v1h-1zM3 5h2v1h-2zM7 5h1v1h-1zM0 6h1v1h-1zM7 6h1v1h-1zM0 7h1v1h-1zM7 7h1v1h-1z" fill="#000"/></svg>
<svg class="a" style="left:911px;top:622px" width="6" height="8" viewBox="0 0 6 8" shape-rendering="crispEdges"><path d="M1 0h4v1h-4zM0 1h1v1h-1zM5 1h1v1h-1zM0 2h1v1h-1zM1 3h4v1h-4zM5 4h1v1h-1zM5 5h1v1h-1zM0 6h1v1h-1zM5 6h1v1h-1zM1 7h4v1h-4z" fill="#000"/></svg>
<svg class="a" style="left:923px;top:622px" width="10" height="9" viewBox="0 0 10 9" shape-rendering="crispEdges"><path d="M5 0h5v1h-5zM0 1h4v1h-4zM5 1h1v1h-1zM9 1h1v1h-1zM0 2h1v1h-1zM3 2h1v1h-1zM5 2h1v1h-1zM9 2h1v1h-1zM0 3h1v1h-1zM3 3h1v1h-1zM5 3h5v1h-5zM0 4h4v1h-4zM5 4h1v1h-1zM9 4h1v1h-1zM0 5h1v1h-1zM3 5h1v1h-1zM5 5h1v1h-1zM9 5h1v1h-1zM0 6h4v1h-4zM5 6h5v1h-5zM4 7h1v1h-1zM9 7h1v1h-1zM3 8h1v1h-1zM8 8h2v1h-2z" fill="#000"/></svg>
<svg class="a" style="left:934px;top:622px" width="10" height="9" viewBox="0 0 10 9" shape-rendering="crispEdges"><path d="M2 0h1v1h-1zM5 0h5v1h-5zM0 1h5v1h-5zM6 1h1v1h-1zM9 1h1v1h-1zM0 2h1v1h-1zM4 2h1v1h-1zM6 2h4v1h-4zM0 3h5v1h-5zM6 3h1v1h-1zM9 3h1v1h-1zM0 4h1v1h-1zM4 4h1v1h-1zM6 4h1v1h-1zM9 4h1v1h-1zM0 5h5v1h-5zM6 5h4v1h-4zM2 6h1v1h-1zM6 6h1v1h-1zM9 6h1v1h-1zM0 7h5v1h-5zM6 7h1v1h-1zM9 7h1v1h-1zM2 8h1v1h-1zM5 8h1v1h-1zM8 8h2v1h-2z" fill="#000"/></svg>
<div class="t" style="left:945px;top:620px">"</div>
<div class="sep" style="top:660px"></div>
<svg class="a" style="left:81px;top:641px" width="15" height="15" viewBox="0 0 15 15"><path d="M7.5 0.8L14.2 7.5L7.5 14.2L0.8 7.5Z" fill="#c8ebb0" stroke="#4a8a22" stroke-width="1.1"/><path d="M7.5 4L11 7.5L7.5 11L4 7.5Z" fill="#4a8a1e"/></svg>
<div class="t" style="left:98.5px;top:642px">familyName</div>
<div class="t" style="left:477.5px;top:642px">String</div>
<div class="btn" style="left:876px;top:640px"><i style="left:2px"></i><i style="left:5px"></i><i style="left:8px"></i></div>
<div class="btn" style="left:1344px;top:640px"><i style="left:2px"></i><i style="left:5px"></i><i style="left:8px"></i></div>
<div class="t" style="left:894px;top:642px;letter-spacing:-0.45px">"MS Mincho"</div>
<div class="sep" style="top:682px"></div>
<svg class="a" style="left:81px;top:663px" width="15" height="15" viewBox="0 0 15 15"><path d="M7.5 0.8L14.2 7.5L7.5 14.2L0.8 7.5Z" fill="#c8ebb0" stroke="#4a8a22" stroke-width="1.1"/><path d="M7.5 4L11 7.5L7.5 11L4 7.5Z" fill="#4a8a1e"/></svg>
<div class="t" style="left:98.5px;top:664px">fullName</div>
<div class="t" style="left:477.5px;top:664px">String</div>
<div class="btn" style="left:876px;top:662px"><i style="left:2px"></i><i style="left:5px"></i><i style="left:8px"></i></div>
<div class="btn" style="left:1344px;top:662px"><i style="left:2px"></i><i style="left:5px"></i><i style="left:8px"></i></div>
<div class="t" style="left:894px;top:664px;letter-spacing:-0.45px">"MS Mincho"</div>
<div class="sep" style="top:704px"></div>
<svg class="a" style="left:81px;top:685px" width="15" height="15" viewBox="0 0 15 15"><path d="M7.5 0.8L14.2 7.5L7.5 14.2L0.8 7.5Z" fill="#c8ebb0" stroke="#4a8a22" stroke-width="1.1"/><path d="M7.5 4L11 7.5L7.5 11L4 7.5Z" fill="#4a8a1e"/></svg>
<div class="t" style="left:98.5px;top:686px">localeFamilyName</div>
<div class="t" style="left:477.5px;top:686px">String</div>
<div class="btn" style="left:876px;top:684px"><i style="left:2px"></i><i style="left:5px"></i><i style="left:8px"></i></div>
<div class="btn" style="left:1344px;top:684px"><i style="left:2px"></i><i style="left:5px"></i><i style="left:8px"></i></div>
<div class="t" style="left:894px;top:686px">"</div>
<svg class="a" style="left:899px;top:688px" width="8" height="8" viewBox="0 0 8 8" shape-rendering="crispEdges"><path d="M0 0h1v1h-1zM7 0h1v1h-1zM0 1h2v1h-2zM6 1h2v1h-2zM0 2h1v1h-1zM2 2h1v1h-1zM5 2h1v1h-1zM7 2h1v1h-1zM0 3h1v1h-1zM2 3h1v1h-1zM5 3h1v1h-1zM7 3h1v1h-1zM0 4h1v1h-1zM3 4h2v1h-2zM7 4h1v1h-1zM0 5h1v1h-1zM3 5h2v1h-2zM7 5h1v1h-1zM0 6h1v1h-1zM7 6h1v1h-1zM0 7h1v1h-1zM7 7h1v1h-1z" fill="#000"/></svg>
<svg class="a" style="left:911px;top:688px" width="6" height="8" viewBox="0 0 6 8" shape-rendering="crispEdges"><path d="M1 0h4v1h-4zM0 1h1v1h-1zM5 1h1v1h-1zM0 2h1v1h-1zM1 3h4v1h-4zM5 4h1v1h-1zM5 5h1v1h-1zM0 6h1v1h-1zM5 6h1v1h-1zM1 7h4v1h-4z" fill="#000"/></svg>
<svg class="a" style="left:923px;top:688px" width="10" height="9" viewBox="0 0 10 9" shape-rendering="crispEdges"><path d="M5 0h5v1h-5zM0 1h4v1h-4zM5 1h1v1h-1zM9 1h1v1h-1zM0 2h1v1h-1zM3 2h1v1h-1zM5 2h1v1h-1zM9 2h1v1h-1zM0 3h1v1h-1zM3 3h1v1h-1zM5 3h5v1h-5zM0 4h4v1h-4zM5 4h1v1h-1zM9 4h1v1h-1zM0 5h1v1h-1zM3 5h1v1h-1zM5 5h1v1h-1zM9 5h1v1h-1zM0 6h4v1h-4zM5 6h5v1h-5zM4 7h1v1h-1zM9 7h1v1h-1zM3 8h1v1h-1zM8 8h2v1h-2z" fill="#000"/></svg>
<svg class="a" style="left:934px;top:688px" width="10" height="9" viewBox="0 0 10 9" shape-rendering="crispEdges"><path d="M2 0h1v1h-1zM5 0h5v1h-5zM0 1h5v1h-5zM6 1h1v1h-1zM9 1h1v1h-1zM0 2h1v1h-1zM4 2h1v1h-1zM6 2h4v1h-4zM0 3h5v1h-5zM6 3h1v1h-1zM9 3h1v1h-1zM0 4h1v1h-1zM4 4h1v1h-1zM6 4h1v1h-1zM9 4h1v1h-1zM0 5h5v1h-5zM6 5h4v1h-4zM2 6h1v1h-1zM6 6h1v1h-1zM9 6h1v1h-1zM0 7h5v1h-5zM6 7h1v1h-1zM9 7h1v1h-1zM2 8h1v1h-1zM5 8h1v1h-1zM8 8h2v1h-2z" fill="#000"/></svg>
<div class="t" style="left:945px;top:686px">"</div>
<div class="sep" style="top:726px"></div>
<svg class="a" style="left:81px;top:707px" width="15" height="15" viewBox="0 0 15 15"><path d="M7.5 0.8L14.2 7.5L7.5 14.2L0.8 7.5Z" fill="#c8ebb0" stroke="#4a8a22" stroke-width="1.1"/><path d="M7.5 4L11 7.5L7.5 11L4 7.5Z" fill="#4a8a1e"/></svg>
<div class="t" style="left:98.5px;top:708px">localeFullName</div>
<div class="t" style="left:477.5px;top:708px">String</div>
<div class="btn" style="left:876px;top:706px"><i style="left:2px"></i><i style="left:5px"></i><i style="left:8px"></i></div>
<div class="btn" style="left:1344px;top:706px"><i style="left:2px"></i><i style="left:5px"></i><i style="left:8px"></i></div>
<div class="t" style="left:894px;top:708px">"</div>
<svg class="a" style="left:899px;top:710px" width="8" height="8" viewBox="0 0 8 8" shape-rendering="crispEdges"><path d="M0 0h1v1h-1zM7 0h1v1h-1zM0 1h2v1h-2zM6 1h2v1h-2zM0 2h1v1h-1zM2 2h1v1h-1zM5 2h1v1h-1zM7 2h1v1h-1zM0 3h1v1h-1zM2 3h1v1h-1zM5 3h1v1h-1zM7 3h1v1h-1zM0 4h1v1h-1zM3 4h2v1h-2zM7 4h1v1h-1zM0 5h1v1h-1zM3 5h2v1h-2zM7 5h1v1h-1zM0 6h1v1h-1zM7 6h1v1h-1zM0 7h1v1h-1zM7 7h1v1h-1z" fill="#000"/></svg>
<svg class="a" style="left:911px;top:710px" width="6" height="8" viewBox="0 0 6 8" shape-rendering="crispEdges"><path d="M1 0h4v1h-4zM0 1h1v1h-1zM5 1h1v1h-1zM0 2h1v1h-1zM1 3h4v1h-4zM5 4h1v1h-1zM5 5h1v1h-1zM0 6h1v1h-1zM5 6h1v1h-1zM1 7h4v1h-4z" fill="#000"/></svg>
<svg class="a" style="left:923px;top:710px" width="10" height="9" viewBox="0 0 10 9" shape-rendering="crispEdges"><path d="M5 0h5v1h-5zM0 1h4v1h-4zM5 1h1v1h-1zM9 1h1v1h-1zM0 2h1v1h-1zM3 2h1v1h-1zM5 2h1v1h-1zM9 2h1v1h-1zM0 3h1v1h-1zM3 3h1v1h-1zM5 3h5v1h-5zM0 4h4v1h-4zM5 4h1v1h-1zM9 4h1v1h-1zM0 5h1v1h-1zM3 5h1v1h-1zM5 5h1v1h-1zM9 5h1v1h-1zM0 6h4v1h-4zM5 6h5v1h-5zM4 7h1v1h-1zM9 7h1v1h-1zM3 8h1v1h-1zM8 8h2v1h-2z" fill="#000"/></svg>
<svg class="a" style="left:934px;top:710px" width="10" height="9" viewBox="0 0 10 9" shape-rendering="crispEdges"><path d="M2 0h1v1h-1zM5 0h5v1h-5zM0 1h5v1h-5zM6 1h1v1h-1zM9 1h1v1h-1zM0 2h1v1h-1zM4 2h1v1h-1zM6 2h4v1h-4zM0 3h5v1h-5zM6 3h1v1h-1zM9 3h1v1h-1zM0 4h1v1h-1zM4 4h1v1h-1zM6 4h1v1h-1zM9 4h1v1h-1zM0 5h5v1h-5zM6 5h4v1h-4zM2 6h1v1h-1zM6 6h1v1h-1zM9 6h1v1h-1zM0 7h5v1h-5zM6 7h1v1h-1zM9 7h1v1h-1zM2 8h1v1h-1zM5 8h1v1h-1zM8 8h2v1h-2z" fill="#000"/></svg>
<div class="t" style="left:945px;top:708px">"</div>
<div class="sep" style="top:748px"></div>
<svg class="a" style="left:81px;top:729px" width="15" height="15" viewBox="0 0 15 15"><path d="M7.5 0.8L14.2 7.5L7.5 14.2L0.8 7.5Z" fill="#c8ebb0" stroke="#4a8a22" stroke-width="1.1"/><path d="M7.5 4L11 7.5L7.5 11L4 7.5Z" fill="#4a8a1e"/></svg>
<div class="t" style="left:98.5px;top:730px">styleName</div>
<div class="t" style="left:477.5px;top:730px">String</div>
<div class="btn" style="left:876px;top:728px"><i style="left:2px"></i><i style="left:5px"></i><i style="left:8px"></i></div>
<div class="btn" style="left:1344px;top:728px"><i style="left:2px"></i><i style="left:5px"></i><i style="left:8px"></i></div>
<div class="t" style="left:894px;top:730px">"Regular"</div>
<div class="sep" style="top:770px"></div>
<svg class="a" style="left:81px;top:751px" width="15" height="15" viewBox="0 0 15 15"><path d="M7.5 0.8L14.2 7.5L7.5 14.2L0.8 7.5Z" fill="#c8ebb0" stroke="#4a8a22" stroke-width="1.1"/><path d="M7.5 4L11 7.5L7.5 11L4 7.5Z" fill="#4a8a1e"/></svg>
<div class="t" style="left:98.5px;top:752px">localeStyleName</div>
<div class="t" style="left:477.5px;top:752px">String</div>
<div class="btn" style="left:876px;top:750px"><i style="left:2px"></i><i style="left:5px"></i><i style="left:8px"></i></div>
<div class="btn" style="left:1344px;top:750px"><i style="left:2px"></i><i style="left:5px"></i><i style="left:8px"></i></div>
<div class="t" style="left:894px;top:752px">"</div>
<svg class="a" style="left:898px;top:754px" width="9" height="9" viewBox="0 0 9 9" shape-rendering="crispEdges"><path d="M1 0h1v1h-1zM3 0h6v1h-6zM1 1h1v1h-1zM4 1h1v1h-1zM6 1h1v1h-1zM0 2h4v1h-4zM5 2h1v1h-1zM7 2h1v1h-1zM1 3h1v1h-1zM3 3h6v1h-6zM0 4h2v1h-2zM1 5h1v1h-1zM3 5h6v1h-6zM0 6h3v1h-3zM5 6h1v1h-1zM1 7h1v1h-1zM3 7h1v1h-1zM5 7h1v1h-1zM7 7h1v1h-1zM1 8h1v1h-1zM5 8h1v1h-1z" fill="#000"/></svg>
<svg class="a" style="left:909px;top:754px" width="9" height="9" viewBox="0 0 9 9" shape-rendering="crispEdges"><path d="M0 0h1v1h-1zM3 0h1v1h-1zM5 0h1v1h-1zM1 1h1v1h-1zM3 1h6v1h-6zM3 2h1v1h-1zM6 2h1v1h-1zM0 3h1v1h-1zM3 3h6v1h-6zM1 4h1v1h-1zM3 4h1v1h-1zM6 4h1v1h-1zM0 5h1v1h-1zM3 5h6v1h-6zM5 6h1v1h-1zM0 7h9v1h-9zM5 8h1v1h-1z" fill="#000"/></svg>
<div class="t" style="left:920px;top:752px">"</div>
<div class="sep" style="top:792px"></div>
<svg class="a" style="left:81px;top:773px" width="15" height="15" viewBox="0 0 15 15"><path d="M7.5 0.8L14.2 7.5L7.5 14.2L0.8 7.5Z" fill="#c8ebb0" stroke="#4a8a22" stroke-width="1.1"/><path d="M7.5 4L11 7.5L7.5 11L4 7.5Z" fill="#4a8a1e"/></svg>
<div class="t" style="left:98.5px;top:774px">raFile</div>
<div class="btn" style="left:876px;top:772px"><i style="left:2px"></i><i style="left:5px"></i><i style="left:8px"></i></div>
<div class="btn" style="left:1344px;top:772px"><i style="left:2px"></i><i style="left:5px"></i><i style="left:8px"></i></div>
<div class="t" style="left:894px;top:774px">null</div>
<div class="sep" style="top:814px"></div>
<svg class="a" style="left:81px;top:795px" width="15" height="15" viewBox="0 0 15 15"><path d="M7.5 0.8L14.2 7.5L7.5 14.2L0.8 7.5Z" fill="#c8ebb0" stroke="#4a8a22" stroke-width="1.1"/><path d="M7.5 4L11 7.5L7.5 11L4 7.5Z" fill="#4a8a1e"/></svg>
<div class="t" style="left:98.5px;top:796px">filename</div>
<div class="t" style="left:477.5px;top:796px">String</div>
<div class="btn" style="left:876px;top:794px"><i style="left:2px"></i><i style="left:5px"></i><i style="left:8px"></i></div>
<div class="btn" style="left:1344px;top:794px"><i style="left:2px"></i><i style="left:5px"></i><i style="left:8px"></i></div>
<div class="t" style="left:894px;top:796px;letter-spacing:0.12px">"C:\\windows\\Fonts\\msmincho.ttc"</div>
<div class="sep" style="top:836px"></div>
<svg class="a" style="left:81px;top:817px" width="15" height="15" viewBox="0 0 15 15"><path d="M7.5 0.8L14.2 7.5L7.5 14.2L0.8 7.5Z" fill="#c8ebb0" stroke="#4a8a22" stroke-width="1.1"/><path d="M7.5 4L11 7.5L7.5 11L4 7.5Z" fill="#4a8a1e"/></svg>
<div class="t" style="left:98.5px;top:818px">filesize</div>
<div class="t" style="left:477.5px;top:818px">int</div>
<div class="btn" style="left:876px;top:816px"><i style="left:2px"></i><i style="left:5px"></i><i style="left:8px"></i></div>
<div class="btn" style="left:1344px;top:816px"><i style="left:2px"></i><i style="left:5px"></i><i style="left:8px"></i></div>
<div class="t" style="left:894px;top:818px">10057108</div>
<div class="hl" style="left:890px;top:313px;width:66px;height:15.5px"></div>
<div class="hl" style="left:890px;top:310px;width:8px;height:3px"></div>
<div class="hl" style="left:898px;top:311px;width:11px;height:2px"></div>
<div class="hl" style="left:909px;top:312px;width:7px;height:1px"></div>
<div class="hl" style="left:890px;top:327px;width:4px;height:1.5px"></div>
<div class="hl" style="left:890px;top:331px;width:72px;height:15.5px"></div>
<div class="hl" style="left:890px;top:329.3px;width:45px;height:1.6999999999999886px"></div>
<div class="hl" style="left:910px;top:346.5px;width:35px;height:2.1999999999999886px"></div>
<div class="hl" style="left:891px;top:444px;width:69px;height:16px"></div>
<div class="hl" style="left:896px;top:620px;width:68px;height:16px"></div>
<div class="hl" style="left:894px;top:645.5px;width:61px;height:15.5px"></div>
<div class="hl" style="left:894px;top:644px;width:11px;height:1.5px"></div>
<div class="hl" style="left:900px;top:661px;width:55px;height:1.7000000000000455px"></div>
<div class="hl" style="left:896px;top:669px;width:71px;height:16px"></div>
<div class="hl" style="left:900px;top:686px;width:52px;height:16px"></div>
<div class="hl" style="left:892px;top:795px;width:177px;height:19px"></div>
<div class="a" style="left:1359px;top:243px;width:17px;height:596px;background:#eeeeee"></div>
<div class="a" style="left:1365px;top:250px;width:0;height:0;border-left:4px solid transparent;border-right:4px solid transparent;border-bottom:4px solid #333"></div>
<div class="a" style="left:1361px;top:290px;width:14px;height:244px;border:1px solid #9a9a9a;border-radius:2px;background:linear-gradient(90deg,#f8f8f8,#e4e4e4 55%,#c6c6c6)"></div>
<div class="a" style="left:1365px;top:407px;width:6px;height:1px;background:#444"></div>
<div class="a" style="left:1365px;top:410px;width:6px;height:1px;background:#444"></div>
<div class="a" style="left:1365px;top:413px;width:6px;height:1px;background:#444"></div>
<div class="a" style="left:1365px;top:828px;width:0;height:0;border-left:3.5px solid transparent;border-right:3.5px solid transparent;border-top:4px solid #333"></div>
<div class="a" style="left:1360px;top:219px;width:15px;height:23px;border:1px solid #707070;border-radius:3px;background:linear-gradient(#fafafa,#e8e8e8 60%,#d0d0d0)"></div>
<svg class="a" style="left:1360px;top:221px" width="16" height="19" viewBox="0 0 16 19">
<rect x="2.5" y="1.5" width="13" height="12" fill="#cfcff5" stroke="#8080b8" stroke-width="1"/>
<path d="M11.5 1.5V13.5 M2.5 5.5H15.5 M2.5 9.5H15.5" stroke="#a0a0d0" stroke-width="1"/>
<path d="M5 1L6 4L9 3L7.5 5.8L10 7.5L7 8L7.5 11L5 9L2.5 11L3 8L0 7.5L2.5 5.8L1 3L4 4Z" fill="#ffd000" stroke="#d08a00" stroke-width="0.8"/>
<path d="M5.5 6.5L14 15" stroke="#000" stroke-width="2.2"/><path d="M5.5 6.5L7.5 8.5" stroke="#fff" stroke-width="1.5"/>
</svg>
<div class="a" style="left:0;top:838px;width:1377px;height:1px;background:#8d9099"></div>
</body></html>
